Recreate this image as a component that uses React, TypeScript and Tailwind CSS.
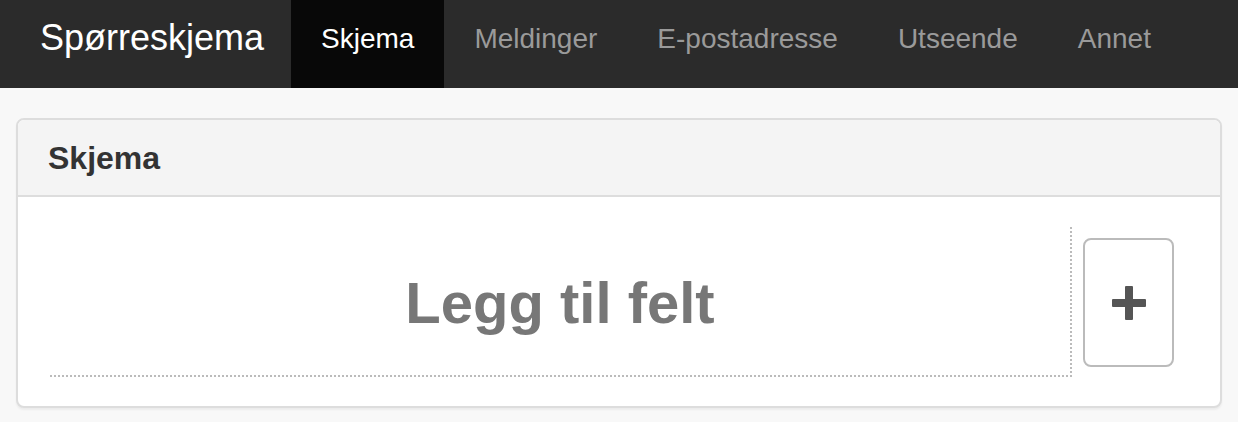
import React from 'react';

const navItems = ['Skjema', 'Meldinger', 'E-postadresse', 'Utseende', 'Annet'];

const App: React.FC = () => {
  const active = 'Skjema';

  return (
    <div className="min-h-screen bg-[#f8f8f8] font-['Liberation_Sans',Arial,sans-serif]">
      {/* Top navbar */}
      <nav className="flex h-[88px] bg-[#2b2b2b]">
        <div className="w-[291px] pl-[40px] pt-[18px] text-[36px] leading-[40px] text-white">
          Spørreskjema
        </div>
        <ul className="flex">
          {navItems.map((item) => (
            <li key={item}>
              <a
                href="#"
                className={
                  item === active
                    ? 'block h-[88px] bg-[#080808] px-[30px] pt-[19px] text-[28px] leading-[40px] text-white'
                    : 'block h-[88px] px-[30px] pt-[19px] text-[28px] leading-[40px] text-[#9a9a9a]'
                }
              >
                {item}
              </a>
            </li>
          ))}
        </ul>
      </nav>

      {/* Panel */}
      <div className="px-[16px] pt-[30px]">
        <div className="rounded-[8px] border-2 border-[#dddddd] bg-white shadow-[0_2px_2px_rgba(0,0,0,0.05)]">
          <div className="rounded-t-[6px] border-b-2 border-[#dddddd] bg-[#f4f4f4] px-[30px] pt-[20px] pb-[19px]">
            <h3 className="text-[32px] font-bold leading-[36px] text-[#333333]">Skjema</h3>
          </div>
          <div className="flex pt-[30px] pr-[46px] pb-[29px] pl-[32px]">
            <div className="flex h-[150px] flex-1 items-center justify-center border-r-2 border-b-2 border-dotted border-[#bbbbbb]">
              <span className="pt-[4px] text-[58px] font-bold leading-none text-[#777777]">Legg til felt</span>
            </div>
            <button className="mt-[11px] ml-[11px] flex h-[129px] w-[91px] items-center justify-center rounded-[8px] border-2 border-[#bbbbbb] bg-white">
              <svg width="34" height="34" viewBox="0 0 34 34" fill="#555555">
                <rect x="0" y="13" width="34" height="8" rx="1" />
                <rect x="13" y="0" width="8" height="34" rx="1" />
              </svg>
            </button>
          </div>
        </div>
      </div>
    </div>
  );
};

export default App;
